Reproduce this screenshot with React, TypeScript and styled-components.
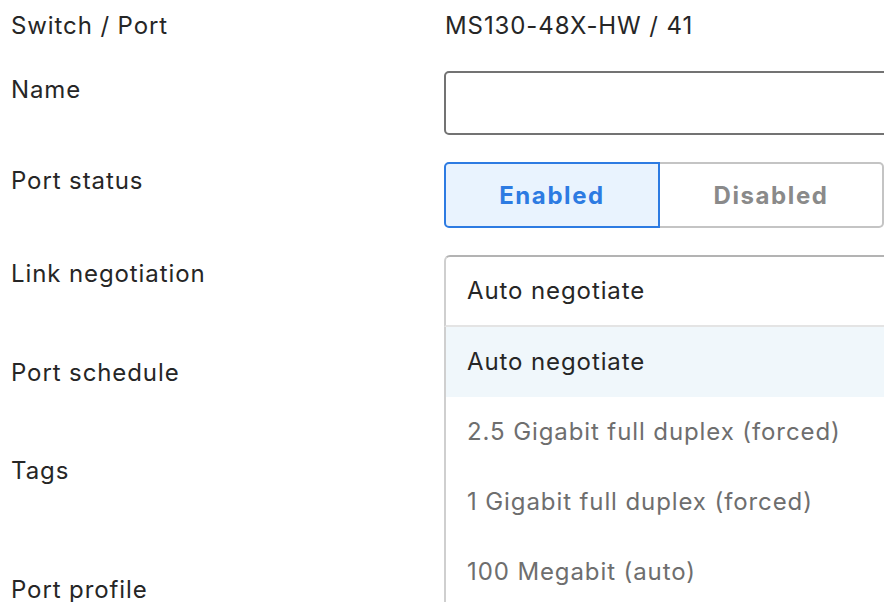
import React, { useState } from 'react';
import styled, { createGlobalStyle } from 'styled-components';

const GlobalStyle = createGlobalStyle`
  html, body {
    margin: 0;
    padding: 0;
    background: #fff;
    overflow: hidden;
  }
  body {
    font-family: Inter, "Noto Sans", "Liberation Sans", sans-serif;
    color: #262626;
    letter-spacing: 0.9px;
  }
`;

const linkOptions = [
  'Auto negotiate',
  '2.5 Gigabit full duplex (forced)',
  '1 Gigabit full duplex (forced)',
  '100 Megabit (auto)',
  '100 Megabit full duplex (forced)',
];

const App: React.FC = () => {
  const [status, setStatus] = useState<'enabled' | 'disabled'>('enabled');
  const [link, setLink] = useState<string>('Auto negotiate');
  const [name, setName] = useState<string>('');

  return (
    <>
      <GlobalStyle />
      <Page>
        <Row>
          <Label>Switch / Port</Label>
          <ValueText>MS130-48X-HW / 41</ValueText>
        </Row>

        <Row>
          <Label>Name</Label>
          <Field>
            <TextInput value={name} onChange={(e) => setName(e.target.value)} />
          </Field>
        </Row>

        <Row>
          <Label>Port status</Label>
          <Field>
            <Toggle>
              <ToggleButton
                active={status === 'enabled'}
                wide={216}
                onClick={() => setStatus('enabled')}
              >
                Enabled
              </ToggleButton>
              <ToggleButton
                active={status === 'disabled'}
                wide={224}
                onClick={() => setStatus('disabled')}
              >
                Disabled
              </ToggleButton>
            </Toggle>
          </Field>
        </Row>

        <Row>
          <Label>Link negotiation</Label>
          <Field>
            <SelectBox>
              <SelectHeader>{link}</SelectHeader>
              <OptionList>
                {linkOptions.map((opt) => (
                  <OptionItem
                    key={opt}
                    selected={opt === link}
                    onClick={() => setLink(opt)}
                  >
                    {opt}
                  </OptionItem>
                ))}
              </OptionList>
            </SelectBox>
          </Field>
        </Row>

        {/* these sit under the open dropdown */}
        <Row>
          <Label>Port schedule</Label>
          <Field>
            <PlainBox height={71} />
          </Field>
        </Row>

        <Row>
          <Label>Tags</Label>
          <Field>
            <PlainBox height={92} />
          </Field>
        </Row>

        <Row>
          <Label>Port profile</Label>
          <Field>
            <PlainBox height={71} />
          </Field>
        </Row>
      </Page>
    </>
  );
};

const Page = styled.div`
  width: 884px;
  height: 602px;
  overflow: hidden;
  box-sizing: border-box;
  padding: 7px 0 0 11px;
  display: flex;
  flex-direction: column;
  gap: 27px;
`;

const Row = styled.div`
  display: grid;
  grid-template-columns: 433px 460px;
  align-items: start;
`;

const Label = styled.div`
  font-size: 24px;
  line-height: 36px;
  padding-top: 1px;
  color: #262626;
`;

const ValueText = styled.div`
  font-size: 24px;
  line-height: 36px;
  padding-top: 1px;
  padding-left: 1px;
  color: #262626;
`;

const Field = styled.div`
  position: relative;
`;

const TextInput = styled.input`
  box-sizing: border-box;
  width: 460px;
  height: 64px;
  border: 2px solid #737373;
  border-radius: 5px;
  padding: 0 20px;
  font: inherit;
  font-size: 24px;
  outline: none;
  display: block;
`;

const Toggle = styled.div`
  display: flex;
  height: 66px;
`;

const ToggleButton = styled.button<{ active: boolean; wide: number }>`
  box-sizing: border-box;
  width: ${(p) => p.wide}px;
  height: 100%;
  margin: 0;
  font-family: Inter, "Noto Sans", "Liberation Sans", sans-serif;
  font-size: 24px;
  font-weight: 700;
  letter-spacing: 1.6px;
  cursor: pointer;
  border: 2px solid ${(p) => (p.active ? '#2d7be2' : '#c4c4c4')};
  background: ${(p) => (p.active ? '#e9f3fe' : '#fff')};
  color: ${(p) => (p.active ? '#2d7be2' : '#8a8a8a')};

  &:first-child {
    border-radius: 5px 0 0 5px;
  }
  &:last-child {
    border-left: none;
    border-radius: 0 5px 5px 0;
  }
`;

const SelectBox = styled.div`
  position: relative;
  width: 460px;
  z-index: 5;
`;

const SelectHeader = styled.div`
  box-sizing: border-box;
  height: 72px;
  padding: 0 21px;
  display: flex;
  align-items: center;
  font-size: 24px;
  line-height: 36px;
  color: #262626;
  border-top: 2px solid #b3b3b3;
  border-left: 2px solid #cfcfcf;
  border-bottom: 2px solid #e4e4e4;
  border-radius: 6px 0 0 0;
  background: #fff;
`;

const OptionList = styled.div`
  position: absolute;
  top: 72px;
  left: 0;
  width: 460px;
  box-sizing: border-box;
  border-left: 2px solid #cfcfcf;
  background: #fff;
`;

const OptionItem = styled.div<{ selected: boolean }>`
  height: 70px;
  padding: 0 21px;
  display: flex;
  align-items: center;
  font-size: 24px;
  line-height: 36px;
  cursor: pointer;
  color: ${(p) => (p.selected ? '#262626' : '#6e6e6e')};
  background: ${(p) => (p.selected ? '#f0f7fb' : '#fff')};
`;

const PlainBox = styled.div<{ height: number }>`
  box-sizing: border-box;
  width: 460px;
  height: ${(p) => p.height}px;
  border: 2px solid #b3b3b3;
  border-radius: 5px;
`;

export default App;
